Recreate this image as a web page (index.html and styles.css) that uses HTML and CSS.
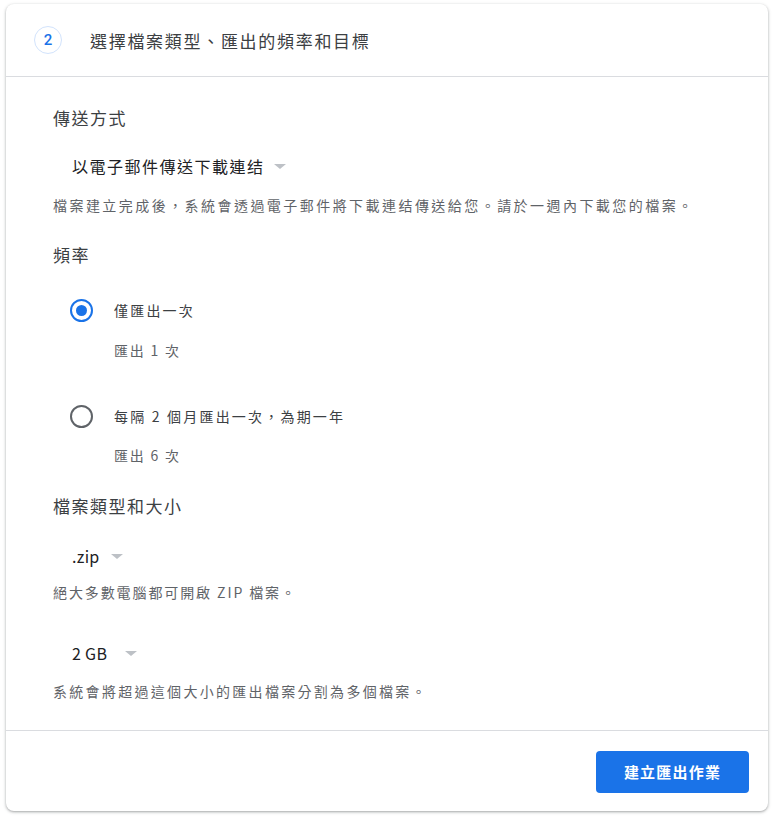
FILE: index.html
```html
<!DOCTYPE html>
<html lang="zh-Hant">
<head>
<meta charset="utf-8">
<link rel="stylesheet" href="styles.css">
</head>
<body>
<div class="card">
  <div class="header">
    <span class="step">2</span>
    <span class="title">選擇檔案類型、匯出的頻率和目標</span>
  </div>
  <div class="content">
    <div class="section-title">傳送方式</div>
    <div class="dropdown dd-method">以電子郵件傳送下載連结<span class="caret"></span></div>
    <div class="desc d1">檔案建立完成後，系統會透過電子郵件將下載連结傳送給您。請於一週內下載您的檔案。</div>

    <div class="section-title sec-freq">頻率</div>
    <div class="radio-row first">
      <span class="radio checked"></span>
      <div class="radio-text">
        <div class="radio-label">僅匯出一次</div>
        <div class="radio-sub">匯出 1 次</div>
      </div>
    </div>
    <div class="radio-row second">
      <span class="radio"></span>
      <div class="radio-text">
        <div class="radio-label">每隔 2 個月匯出一次，為期一年</div>
        <div class="radio-sub">匯出 6 次</div>
      </div>
    </div>

    <div class="section-title sec-type">檔案類型和大小</div>
    <div class="dropdown latin dd-zip">.zip<span class="caret"></span></div>
    <div class="desc d2">絕大多數電腦都可開啟 ZIP 檔案。</div>
    <div class="dropdown latin dd-size">2 GB<span class="caret wide"></span></div>
    <div class="desc d3">系統會將超過這個大小的匯出檔案分割為多個檔案。</div>
  </div>
  <div class="footer">
    <button class="primary">建立匯出作業</button>
  </div>
</div>
</body>
</html>
```
FILE: styles.css
```css
html, body {
  margin: 0;
  padding: 0;
  background: #ffffff;
}
body {
  padding: 4px 7px 6px 6px;
  font-family: "Noto Sans CJK TC", "Noto Sans", "Liberation Sans", sans-serif;
  color: #3c4043;
}
.card {
  box-sizing: border-box;
  width: 762px;
  height: 807px;
  border-radius: 8px;
  background: #fff;
  box-shadow: 0 1px 2px rgba(60,64,67,0.30), 0 1px 3px 1px rgba(60,64,67,0.15);
  display: flex;
  flex-direction: column;
}
.header {
  height: 73px;
  display: flex;
  align-items: center;
  padding-left: 28px;
  border-bottom: 1px solid #dadce0;
  box-sizing: border-box;
  flex: none;
}
.step {
  box-sizing: border-box;
  width: 28px;
  height: 28px;
  border-radius: 50%;
  border: 1px solid #d2e3fc;
  color: #1a73e8;
  font-family: "Roboto", "Liberation Sans", sans-serif;
  font-size: 15px;
  font-weight: 500;
  display: flex;
  align-items: center;
  justify-content: center;
}
.title {
  margin-left: 28px;
  font-size: 17px;
  letter-spacing: 1.7px;
  color: #3c4043;
}
.content {
  flex: 1;
  padding: 27px 0 0 47px;
  border-bottom: 1px solid #dadce0;
}
.section-title {
  font-size: 17px;
  line-height: 28px;
  letter-spacing: 1.5px;
  color: #3c4043;
}
.dropdown {
  display: flex;
  align-items: center;
  font-size: 16px;
  line-height: 24px;
  letter-spacing: 1.5px;
  color: #202124;
  margin-left: 19px;
}
.dropdown.latin {
  letter-spacing: 0.3px;
}
.dd-method { margin-top: 22px; }
.caret {
  width: 0;
  height: 0;
  border-left: 6px solid transparent;
  border-right: 6px solid transparent;
  border-top: 5px solid #bdc1c6;
  margin-left: 9px;
  margin-top: 1px;
}
.dd-zip .caret { margin-left: 11px; }
.caret.wide { margin-left: 18px; }
.desc {
  font-size: 14px;
  line-height: 20px;
  letter-spacing: 2.45px;
  color: #5f6368;
}
.d1 { margin-top: 17px; }
.d2 { margin-top: 14px; letter-spacing: 1.9px; }
.d3 { margin-top: 16px; letter-spacing: 2.3px; }
.sec-freq { margin-top: 26px; }
.radio-row {
  display: flex;
  align-items: flex-start;
  margin-left: 17px;
}
.radio-row.first { margin-top: 29px; }
.radio-row.second { margin-top: 44px; }
.radio {
  box-sizing: border-box;
  width: 23px;
  height: 23px;
  border-radius: 50%;
  border: 2px solid #5f6368;
  flex: none;
  position: relative;
  margin-top: 1px;
}
.radio.checked {
  border-color: #1a73e8;
}
.radio.checked::after {
  content: "";
  position: absolute;
  left: 4px;
  top: 4px;
  width: 11px;
  height: 11px;
  border-radius: 50%;
  background: #1a73e8;
}
.radio-text {
  margin-left: 21px;
}
.radio-label {
  font-size: 14px;
  line-height: 24px;
  letter-spacing: 2.2px;
  color: #3c4043;
}
.radio-sub {
  font-size: 14px;
  line-height: 20px;
  letter-spacing: 1.8px;
  color: #5f6368;
  margin-top: 18px;
}
.second .radio-sub { margin-top: 17px; }
.sec-type { margin-top: 27px; }
.dd-zip { margin-top: 24px; }
.dd-size { margin-top: 39px; }
.footer {
  flex: none;
  height: 80px;
  display: flex;
  align-items: center;
  justify-content: flex-end;
  padding-right: 19px;
}
.primary {
  width: 153px;
  height: 42px;
  border: none;
  border-radius: 4px;
  background: #1a73e8;
  color: #fff;
  font-family: "Noto Sans CJK TC", "Noto Sans", sans-serif;
  font-size: 15px;
  font-weight: 700;
  letter-spacing: 1.2px;
  margin-top: 1px;
}
```
